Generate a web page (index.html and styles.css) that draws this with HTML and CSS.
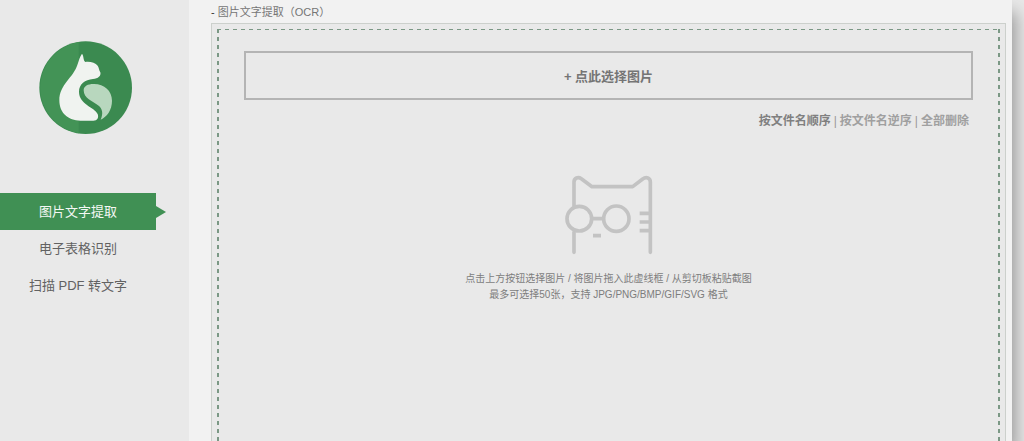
FILE: index.html
```html
<!DOCTYPE html>
<html lang="zh-CN">
<head>
<meta charset="utf-8">
<meta name="viewport" content="width=device-width, initial-scale=1">
<title>图片文字提取（OCR）</title>
<link rel="stylesheet" href="styles.css">
</head>
<body>
<div class="window">
  <aside class="sidebar">
    <svg class="logo" viewBox="27 33 282 282" aria-hidden="true">
      <circle cx="167" cy="173" r="139" fill="#3b8a50"/>
      <path d="M146 36A139 139 0 0 0 146 310Z" fill="#439356"/>
      <path d="M156 71C149 80 147 91 142 105C130 143 88 164 88 211C88 250 116 272 151 272H190C202 272 207 264 203 252C195 232 147 224 147 185C147 163 165 149 189 147C204 146 214 138 211 127C207 121 207 113 203 107C196 98 180 94 166 96C159 91 162 78 156 71Z" fill="#f0f3f0"/>
      <path d="M161 181C161 168 174 162 190 162C222 161 246 182 246 212C246 240 231 260 212 269C220 251 218 236 204 226C188 213 161 206 161 181Z" fill="#b8d7be"/>
    </svg>
    <nav class="menu">
      <a class="menu-item active" href="#image" aria-current="page">图片文字提取</a>
      <a class="menu-item" href="#table">电子表格识别</a>
      <a class="menu-item" href="#pdf">扫描 PDF 转文字</a>
    </nav>
  </aside>
  <main class="content">
    <h1 class="title"><span class="dash">-</span> 图片文字提取（OCR）</h1>
    <section class="panel">
      <div class="dropzone">
        <button class="select" type="button">+ 点此选择图片</button>
        <div class="actions">
          <button class="action current" type="button">按文件名顺序</button>
          <span class="divider">|</span>
          <button class="action" type="button">按文件名逆序</button>
          <span class="divider">|</span>
          <button class="action" type="button">全部删除</button>
        </div>
        <div class="empty">
          <svg class="cat" viewBox="45 30 264 240" fill="none" stroke="#c3c3c3" stroke-width="11" aria-hidden="true">
            <path d="M72 262V202M72 122V51C72 39 84 34 94 41L126 65H248L278 42C289 34 301 39 301 51V262" stroke-linecap="round" stroke-linejoin="round"/>
            <circle cx="88" cy="161" r="37"/>
            <circle cx="199" cy="161" r="38"/>
            <path d="M125 161H161M129 212H153M269 145H301M269 171H301M269 197H301"/>
          </svg>
          <p class="hint">点击上方按钮选择图片 / 将图片拖入此虚线框 / 从剪切板粘贴截图<br>最多可选择50张，支持 JPG/PNG/BMP/GIF/SVG 格式</p>
        </div>
      </div>
    </section>
  </main>
</div>
</body>
</html>
```
FILE: styles.css
```css
* {
  box-sizing: border-box;
}

body {
  margin: 0;
  overflow: hidden;
  background: #e8e8e8;
  color: #666;
  font-family: "Liberation Sans", "Noto Sans CJK SC", sans-serif;
}

button {
  font-family: inherit;
  cursor: pointer;
}

.window {
  display: flex;
  height: 100vh;
  margin-right: 12px;
  background: #f2f2f2;
  box-shadow: 4px 12px 16px #999;
}

.sidebar {
  display: flex;
  flex: none;
  flex-direction: column;
  width: 189px;
  padding-top: 41px;
  background: #e9e9e9;
}

.logo {
  width: 94px;
  height: 94px;
  margin-left: 39px;
}

.menu {
  display: flex;
  flex-direction: column;
  width: 156px;
  margin-top: 58px;
}

.menu-item {
  position: relative;
  color: #626262;
  font-size: 13px;
  line-height: 37px;
  text-align: center;
  text-decoration: none;
}

.active {
  background: #409054;
  color: #f4f8f4;
}

.active::after {
  content: "";
  position: absolute;
  top: 13px;
  left: 100%;
  border: solid transparent;
  border-width: 6px 0 6px 10px;
  border-left-color: #409054;
}

.content {
  display: flex;
  flex: 1;
  flex-direction: column;
  min-width: 0;
  padding: 2px 6px 0 22px;
}

.title {
  margin: 0;
  color: #757575;
  font-size: 11px;
  font-weight: 400;
  line-height: 21px;
}

.dash {
  color: #333;
}

.panel {
  display: flex;
  flex: 1;
  padding: 5px 5px 0;
  border: 1px solid #ccd0cc;
  border-bottom: 0;
  background: #e9e9e9;
}

.dropzone {
  --stitch: #7b9885 0 4px, transparent 4px 8px;
  flex: 1;
  min-width: 0;
  padding: 22px 27px 0;
  background:
    repeating-linear-gradient(90deg, var(--stitch)) top / 100% 1px no-repeat,
    repeating-linear-gradient(var(--stitch)) left / 2px 100% no-repeat,
    repeating-linear-gradient(var(--stitch)) right / 2px 100% no-repeat;
}

.select {
  display: block;
  width: 100%;
  height: 49px;
  padding: 0;
  border: 2px solid #b4b4b4;
  background: transparent;
  color: #757575;
  font-size: 13px;
  font-weight: 700;
}

.actions {
  display: flex;
  justify-content: flex-end;
  gap: 3px;
  padding: 12px 4px 0;
  font-size: 12px;
  line-height: 18px;
}

.action {
  padding: 0;
  border: 0;
  background: none;
  color: #a0a0a0;
  font-size: inherit;
  font-weight: 700;
  line-height: inherit;
}

.current {
  color: #808080;
}

.divider {
  color: #999;
}

.empty {
  display: flex;
  flex-direction: column;
  align-items: center;
  padding-top: 45px;
}

.cat {
  width: 88px;
  height: 80px;
}

.hint {
  margin: 16px 0 0;
  color: #7d7d7d;
  font-size: 10px;
  line-height: 16px;
  text-align: center;
}
```
